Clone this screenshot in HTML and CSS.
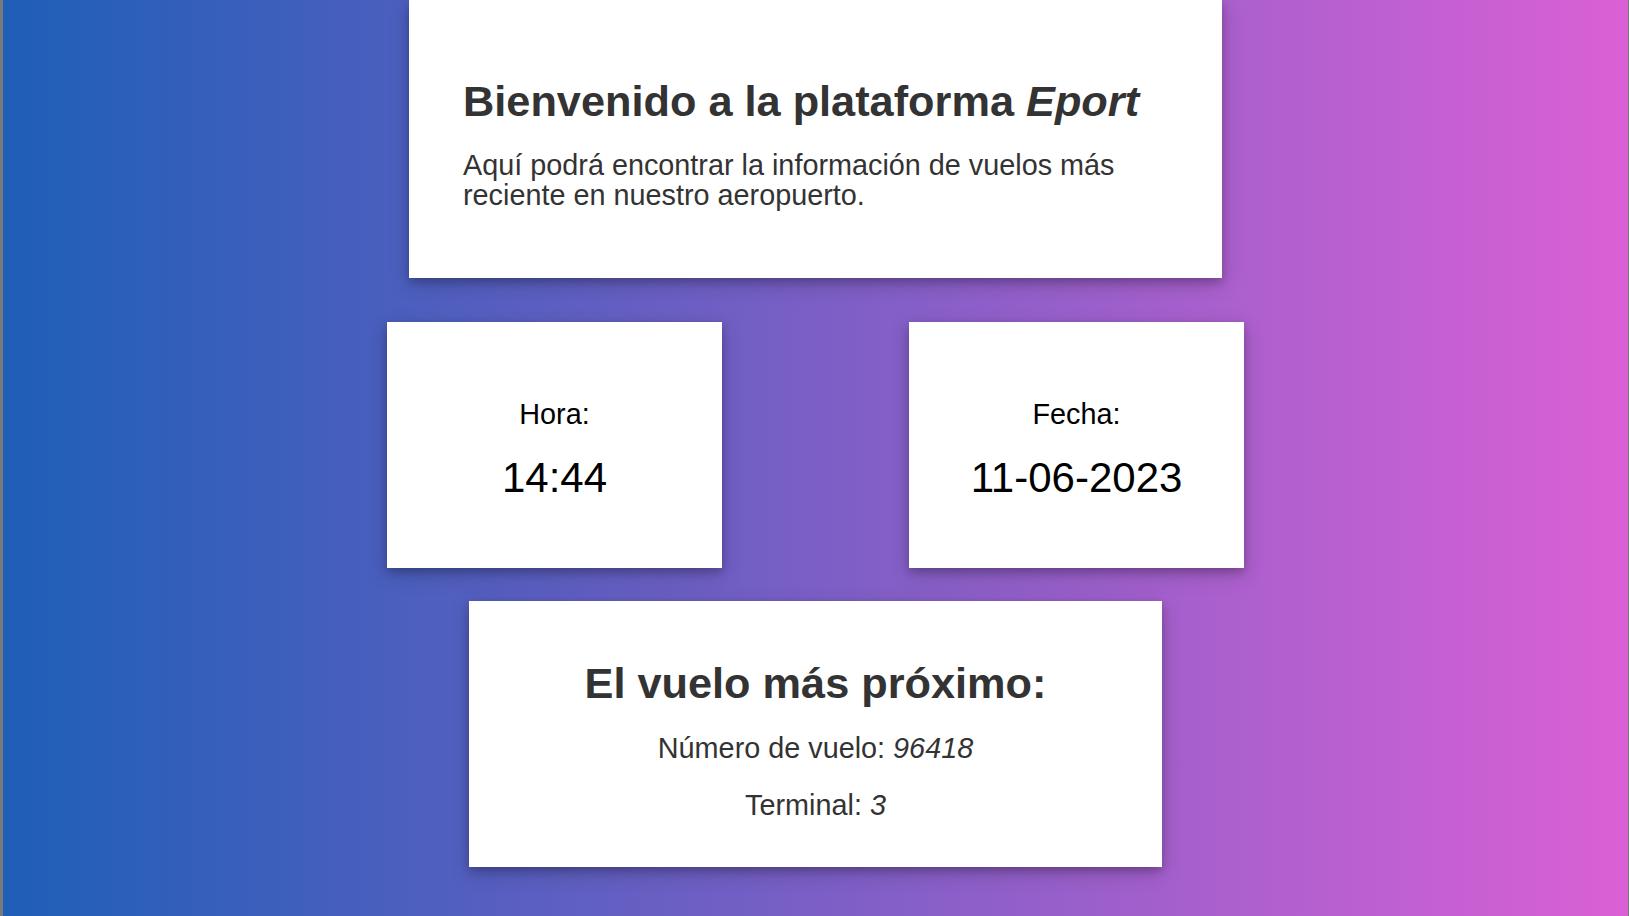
FILE: index.html
```html
<!DOCTYPE html>
<html lang="es">
<head>
<meta charset="utf-8">
<title>Eport</title>
<link rel="stylesheet" href="styles.css">
</head>
<body>
<div class="page">
  <section class="card welcome">
    <h1 class="welcome-title">Bienvenido a la plataforma <em>Eport</em></h1>
    <p class="welcome-text">Aquí podrá encontrar la información de vuelos más reciente en nuestro aeropuerto.</p>
  </section>
  <div class="info-row">
    <section class="card info">
      <p class="info-label">Hora:</p>
      <p class="info-value">14:44</p>
    </section>
    <section class="card info">
      <p class="info-label">Fecha:</p>
      <p class="info-value">11-06-2023</p>
    </section>
  </div>
  <section class="card flight">
    <h2 class="flight-title">El vuelo más próximo:</h2>
    <p class="flight-line">Número de vuelo: <em>96418</em></p>
    <p class="flight-line">Terminal: <em>3</em></p>
  </section>
</div>
</body>
</html>
```

FILE: styles.css
```css
html, body {
  margin: 0;
  padding: 0;
  height: 100%;
}

body {
  font-family: "Liberation Sans", Arial, sans-serif;
  background: #7a7a7a;
}

.page {
  box-sizing: border-box;
  height: 916px;
  margin: 0 1px 0 3px;
  background: linear-gradient(to right, #1e5fb7, #7b5fc6 50%, #da60d5);
  display: flex;
  flex-direction: column;
  align-items: center;
  overflow: hidden;
}

.card {
  background: #fff;
  box-sizing: border-box;
  box-shadow: 0 4px 8px rgba(0, 0, 0, 0.2), 0 6px 20px rgba(0, 0, 0, 0.19);
}

.welcome {
  width: 813px;
  height: 278px;
  padding: 77px 54px 0;
  color: #333;
}

.welcome-title {
  margin: 0 0 24px;
  font-size: 43.3px;
  font-weight: bold;
}

.welcome-title em {
  font-style: italic;
}

.welcome-text {
  margin: 0;
  font-size: 28.8px;
  line-height: 30px;
}

.info-row {
  display: flex;
  gap: 187px;
  margin-top: 44px;
}

.info {
  width: 335px;
  height: 246px;
  padding-top: 76px;
  display: flex;
  flex-direction: column;
  align-items: center;
  gap: 23px;
  color: #000;
}

.info-label {
  margin: 0;
  font-size: 28.8px;
}

.info-value {
  margin: 0;
  font-size: 42px;
}

.flight {
  width: 693px;
  height: 266px;
  margin-top: 33px;
  padding-top: 58px;
  display: flex;
  flex-direction: column;
  align-items: center;
  gap: 24px;
  color: #333;
}

.flight-title {
  margin: 0;
  font-size: 43.3px;
  font-weight: bold;
}

.flight-line {
  margin: 0;
  font-size: 28.8px;
}

.flight-line em {
  font-style: italic;
}
```
